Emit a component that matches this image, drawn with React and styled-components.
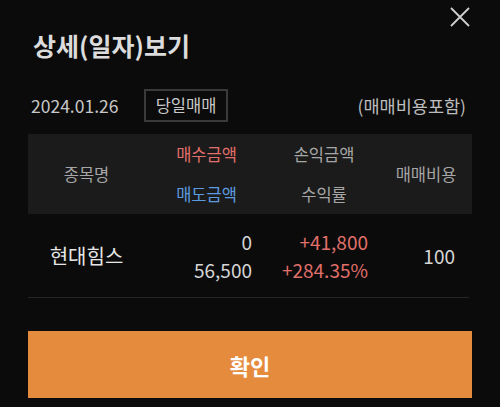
import styled, { createGlobalStyle } from "styled-components";

const GlobalStyle = createGlobalStyle`
  html, body {
    margin: 0;
    padding: 0;
    background: #0b0b0b;
  }
  body {
    font-family: "Noto Sans CJK KR", "Noto Sans", sans-serif;
    color: #d6d6d6;
  }
`;

const detail = {
  date: "2024.01.26",
  badge: "당일매매",
  note: "(매매비용포함)",
  rows: [
    {
      name: "현대힘스",
      buy: "0",
      sell: "56,500",
      profit: "+41,800",
      rate: "+284.35%",
      fee: "100",
    },
  ],
};

export default function App() {
  return (
    <>
      <GlobalStyle />
      <Sheet>
        <CloseButton aria-label="닫기">
          <svg width="20" height="20" viewBox="0 0 20 20">
            <path
              d="M1 1 L19 19 M19 1 L1 19"
              stroke="#cfcfcf"
              strokeWidth="1.8"
              fill="none"
            />
          </svg>
        </CloseButton>
        <Title>상세(일자)보기</Title>
        <InfoRow>
          <DateText>{detail.date}</DateText>
          <Badge>{detail.badge}</Badge>
          <Note>{detail.note}</Note>
        </InfoRow>
        <Table>
          <HeadRow>
            <HeadCell>종목명</HeadCell>
            <HeadCell>
              <HeadLine $color="#e2706a">매수금액</HeadLine>
              <HeadLine $color="#5c9be0">매도금액</HeadLine>
            </HeadCell>
            <HeadCell>
              <HeadLine>손익금액</HeadLine>
              <HeadLine>수익률</HeadLine>
            </HeadCell>
            <HeadCell>매매비용</HeadCell>
          </HeadRow>
          {detail.rows.map((r) => (
            <BodyRow key={r.name}>
              <NameCell>{r.name}</NameCell>
              <NumCell $pad={16}>
                <span>{r.buy}</span>
                <span>{r.sell}</span>
              </NumCell>
              <NumCell $pad={12} $color="#e0706a">
                <span>{r.profit}</span>
                <span>{r.rate}</span>
              </NumCell>
              <FeeCell>{r.fee}</FeeCell>
            </BodyRow>
          ))}
        </Table>
        <ConfirmButton>확인</ConfirmButton>
      </Sheet>
    </>
  );
}

const Sheet = styled.div`
  position: relative;
  width: 500px;
  height: 407px;
  box-sizing: border-box;
  padding: 0 28px;
  display: flex;
  flex-direction: column;
  background: #0b0b0b;
`;

const CloseButton = styled.button`
  position: absolute;
  top: 7px;
  right: 30px;
  width: 20px;
  height: 20px;
  padding: 0;
  border: none;
  background: transparent;
  display: flex;
`;

const Title = styled.h1`
  margin: 28px 0 0 5px;
  font-size: 25px;
  font-weight: 700;
  line-height: 34px;
  color: #dcdcdc;
`;

const InfoRow = styled.div`
  display: flex;
  align-items: center;
  margin-top: 26px;
  padding: 0 6px 0 3px;
  height: 34px;
`;

const DateText = styled.span`
  font-size: 17.5px;
  color: #c8c8c8;
  width: 113px;
`;

const Badge = styled.span`
  box-sizing: border-box;
  height: 33px;
  width: 84px;
  display: flex;
  align-items: center;
  justify-content: center;
  border: 2px solid #3a3a3a;
  font-size: 16.5px;
  color: #c8c8c8;
`;

const Note = styled.span`
  margin-left: auto;
  font-size: 17.5px;
  color: #bdbdbd;
`;

const Table = styled.div`
  margin-top: 12px;
  display: flex;
  flex-direction: column;
`;

const cols = "117px 123px 112px 92px";

const HeadRow = styled.div`
  display: grid;
  grid-template-columns: ${cols};
  height: 80px;
  background: #1b1b1b;
`;

const HeadCell = styled.div`
  display: flex;
  flex-direction: column;
  align-items: center;
  justify-content: center;
  gap: 14px;
  font-size: 16.5px;
  color: #a6a6a6;
`;

const HeadLine = styled.span`
  color: ${(p) => p.$color || "#a6a6a6"};
  line-height: 26px;
`;

const BodyRow = styled.div`
  display: grid;
  grid-template-columns: ${cols};
  height: 83px;
  border-bottom: 1px solid #262626;
  margin-right: 3px;
`;

const NameCell = styled.div`
  display: flex;
  align-items: center;
  justify-content: center;
  font-size: 20px;
  color: #e6e6e6;
`;

const NumCell = styled.div`
  display: flex;
  flex-direction: column;
  align-items: flex-end;
  justify-content: center;
  padding-right: ${(p) => p.$pad}px;
  font-size: 19px;
  line-height: 28px;
  color: ${(p) => p.$color || "#d6d6d6"};
`;

const FeeCell = styled.div`
  display: flex;
  align-items: center;
  justify-content: flex-end;
  padding-right: 17px;
  font-size: 19px;
  color: #d6d6d6;
`;

const ConfirmButton = styled.button`
  margin-top: 33px;
  height: 67px;
  border: none;
  background: #e58b3e;
  color: #ffffff;
  font-family: inherit;
  font-size: 22px;
  font-weight: 700;
`;
